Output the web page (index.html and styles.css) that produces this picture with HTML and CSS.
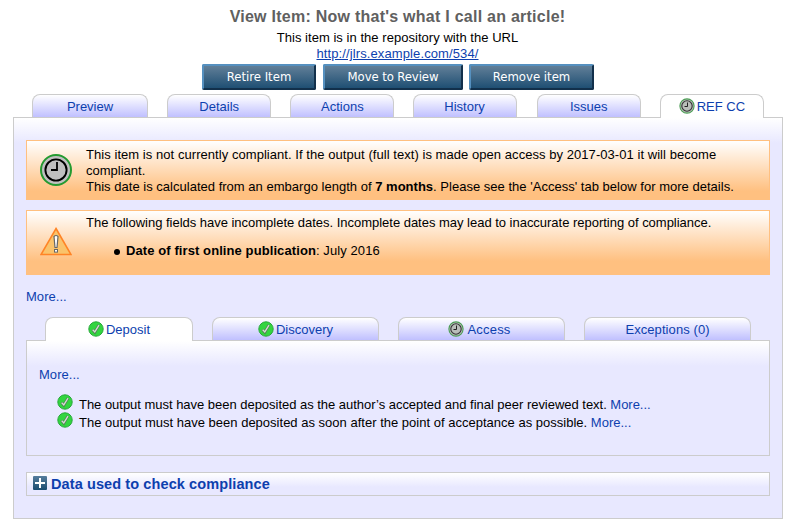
FILE: index.html
```html
<!DOCTYPE html>
<html lang="en">
<head>
<meta charset="utf-8">
<title>View Item</title>
<link rel="stylesheet" href="styles.css">
</head>
<body>
<svg class="defs" width="0" height="0" aria-hidden="true">
  <symbol id="clock" viewBox="0 0 32 32">
    <circle cx="16" cy="16" r="15" fill="#c0c0c0" stroke="#249a30" stroke-width="2"/>
    <circle cx="16" cy="16" r="10.6" fill="none" stroke="#000" stroke-width="1.9"/>
    <path d="M17 8v8h-6" fill="none" stroke="#000" stroke-width="1.8"/>
  </symbol>
  <symbol id="clock-small" viewBox="0 0 16 16">
    <circle cx="8" cy="8" r="7.1" fill="#b9bdb9" stroke="#4b9d54" stroke-width="1.1"/>
    <circle cx="8" cy="8" r="5.2" fill="none" stroke="#333" stroke-width="1.1"/>
    <path d="M8.5 4.5v4h-3" fill="none" stroke="#222" stroke-width="1"/>
  </symbol>
  <symbol id="check" viewBox="0 0 16 16">
    <circle cx="8" cy="8" r="7.2" fill="#32d53f" stroke="#28a83a" stroke-width="1"/>
    <path d="M4.5 8.7l2.3 2.5L11 4" fill="none" stroke="#557a58" stroke-width="2.6"/>
    <path d="M4.7 8.7l2.1 2.2L11 4.2" fill="none" stroke="#d5dfd5" stroke-width="1.3"/>
  </symbol>
</svg>
<header class="head">
  <h1>View Item: Now that's what I call an article!</h1>
  <p class="uri"><span class="u1">This item is in the repository with the URL</span><br><a class="u2" href="#">http://jlrs.example.com/534/</a></p>
  <div class="buttons"><button class="b1">Retire Item</button><button class="b2">Move to Review</button><button class="b3">Remove item</button></div>
</header>
<main>
  <nav class="tabs outer">
    <a class="tab">Preview</a><a class="tab">Details</a><a class="tab">Actions</a><a class="tab">History</a><a class="tab">Issues</a><a class="tab current"><svg class="small"><use href="#clock-small"/></svg>REF CC</a>
  </nav>
  <section class="panel main-panel">
    <div class="message m1">
      <svg class="big"><use href="#clock"/></svg>
      <div class="text"><span class="l1">This item is not currently compliant. If the output (full text) is made open access by 2017-03-01 it will become</span><br><span>compliant.</span><br><span class="l2">This date is calculated from an embargo length of <b>7 months</b>. Please see the 'Access' tab below for more details.</span></div>
    </div>
    <div class="message m2">
      <svg class="big" viewBox="0 0 32 32"><path d="M16 2.5L31 28.5H1z" fill="#fac36b" stroke="#ff8426" stroke-width="1.6"/><path d="M14 10.5q2-2 4 0l-1 11h-2z" fill="#fff" stroke="#666" stroke-width="1.2"/><rect x="14.5" y="23.5" width="3" height="2.6" fill="#fff" stroke="#666"/></svg>
      <div class="text"><span class="l3">The following fields have incomplete dates. Incomplete dates may lead to inaccurate reporting of compliance.</span>
        <ul><li><span class="l4"><b>Date of first online publication</b>: July 2016</span></li></ul>
      </div>
    </div>
    <a class="more top-more">More...</a>
    <nav class="tabs inner">
      <a class="tab current"><svg class="small"><use href="#check"/></svg>Deposit</a><a class="tab"><svg class="small"><use href="#check"/></svg>Discovery</a><a class="tab access"><svg class="small"><use href="#clock-small"/></svg>Access</a><a class="tab exceptions">Exceptions (0)</a>
    </nav>
    <section class="panel inner-panel">
      <a class="more">More...</a>
      <div class="rules">
        <div class="rule"><svg class="small"><use href="#check"/></svg><span class="l5">The output must have been deposited as the author’s accepted and final peer reviewed text. <a>More...</a></span></div>
        <div class="rule"><svg class="small"><use href="#check"/></svg><span class="l6">The output must have been deposited as soon after the point of acceptance as possible. <a>More...</a></span></div>
      </div>
    </section>
    <div class="collapse"><svg class="plus" viewBox="0 0 14 14"><defs><linearGradient id="pg" x2="0" y2="1"><stop stop-color="#567d9c"/><stop offset="1" stop-color="#194b70"/></linearGradient></defs><rect width="14" height="14" rx="1" fill="url(#pg)"/><path d="M7 2v10M2 7h10" stroke="#fff" stroke-width="2"/></svg><span class="l7">Data used to check compliance</span></div>
  </section>
</main>
</body>
</html>
```
FILE: styles.css
```css
* { box-sizing: border-box; }
body { margin: 0; background: #fff; color: #000; font: 13px/16px "Liberation Sans", Arial, sans-serif; white-space: nowrap; }
a { color: #0d3fae; }
svg { display: block; flex: none; }
.defs { position: absolute; }
.head { text-align: center; height: 94px; padding-top: 7px; }
h1 { margin: 0; font-size: 16px; line-height: 20px; color: #606060; letter-spacing: .25px; }
.uri { margin: 3px 0 0; }
.u1 { letter-spacing: .04px; }
.u2 { letter-spacing: .11px; }
.l1 { letter-spacing: .053px; }
.l2 { letter-spacing: .017px; }
.l3 { letter-spacing: -.018px; }
.l4 { letter-spacing: .09px; }
.l5 { letter-spacing: -.025px; }
.l6 { letter-spacing: .01px; }
.l7 { letter-spacing: .1px; }
.buttons { display: flex; margin: 2px 0 0 202px; gap: 7px; }
button { height: 26px; padding: 0; font: 13px/20px "DejaVu Sans Condensed", "DejaVu Sans", sans-serif; color: #fff; background: linear-gradient(#67839b, #194b70) border-box; border: 2px solid; border-color: #5590bf #12304b #12304b #5590bf; border-radius: 2px; }
.b1 { width: 114px; }
.b2 { width: 140px; letter-spacing: -.1px; }
.b3 { width: 125px; margin-left: -1px; }
main { width: 770px; margin-left: 13px; }
.tabs { display: grid; height: 24px; margin-bottom: -1px; position: relative; }
.outer { grid-template-columns: 116px repeat(5, 104px); column-gap: 19.2px; padding-left: 19px; }
.outer .tab:nth-child(4) { margin-left: -1px; margin-right: 1px; }
.inner { grid-template-columns: 148px repeat(3, 167px); column-gap: 19px; padding-left: 19px; }
.tab { display: flex; align-items: center; justify-content: center; gap: 2px; height: 23px; padding-top: 2px; border: 1px solid #ccc; border-bottom: 0; border-radius: 8px 8px 0 0; background: linear-gradient(#fff, #c0c0ff); }
.tab.current { height: 24px; padding-bottom: 1px; background: #fff; }
.access { gap: 3px; padding-right: 4px; letter-spacing: .2px; }
.exceptions { letter-spacing: .08px; }
.small { width: 16px; height: 16px; }
.tab .small { margin-top: -3px; }
.panel { border: 1px solid #ccc; background: #e8e8ff linear-gradient(#fff, #e8e8ff) 0 0 / 100% 25px no-repeat; }
.main-panel { height: 402px; padding: 22px 12px 0; }
.message { display: flex; border: 1px solid #ffc080; background: #ffc080 linear-gradient(#fff, #ffc080) 0 0 / 100% 50px no-repeat; }
.big { width: 32px; height: 32px; margin-left: 13px; }
.text { margin-left: 14px; }
.m1 { height: 60px; padding-top: 6px; }
.m1 .big { margin-top: 7px; }
.m2 { height: 65px; margin-top: 10px; padding-top: 4px; }
.m2 .big { margin-top: 11px; }
ul { margin: 12px 0 0; padding-left: 28px; list-style: none; }
li { display: flex; align-items: center; gap: 6px; }
li::before { content: ""; width: 6px; height: 6px; border-radius: 50%; background: #000; margin-top: 2px; }
.more { display: block; letter-spacing: .04px; }
.top-more { margin: 14px 0 12px; }
.inner-panel { height: 116px; padding: 26px 12px 0; }
.rules { margin: 11px 0 0 18px; }
.rule { display: flex; gap: 6px; height: 18px; }
.rule span { margin-top: 3px; }
.collapse { display: flex; gap: 4px; height: 24px; margin-top: 16px; padding: 3px 6px; border: 1px solid #ccc; background: linear-gradient(#fff, #e8e8ff 14px); color: #0d3fae; font-weight: bold; font-size: 14.5px; }
.plus { width: 14px; height: 14px; }
```
